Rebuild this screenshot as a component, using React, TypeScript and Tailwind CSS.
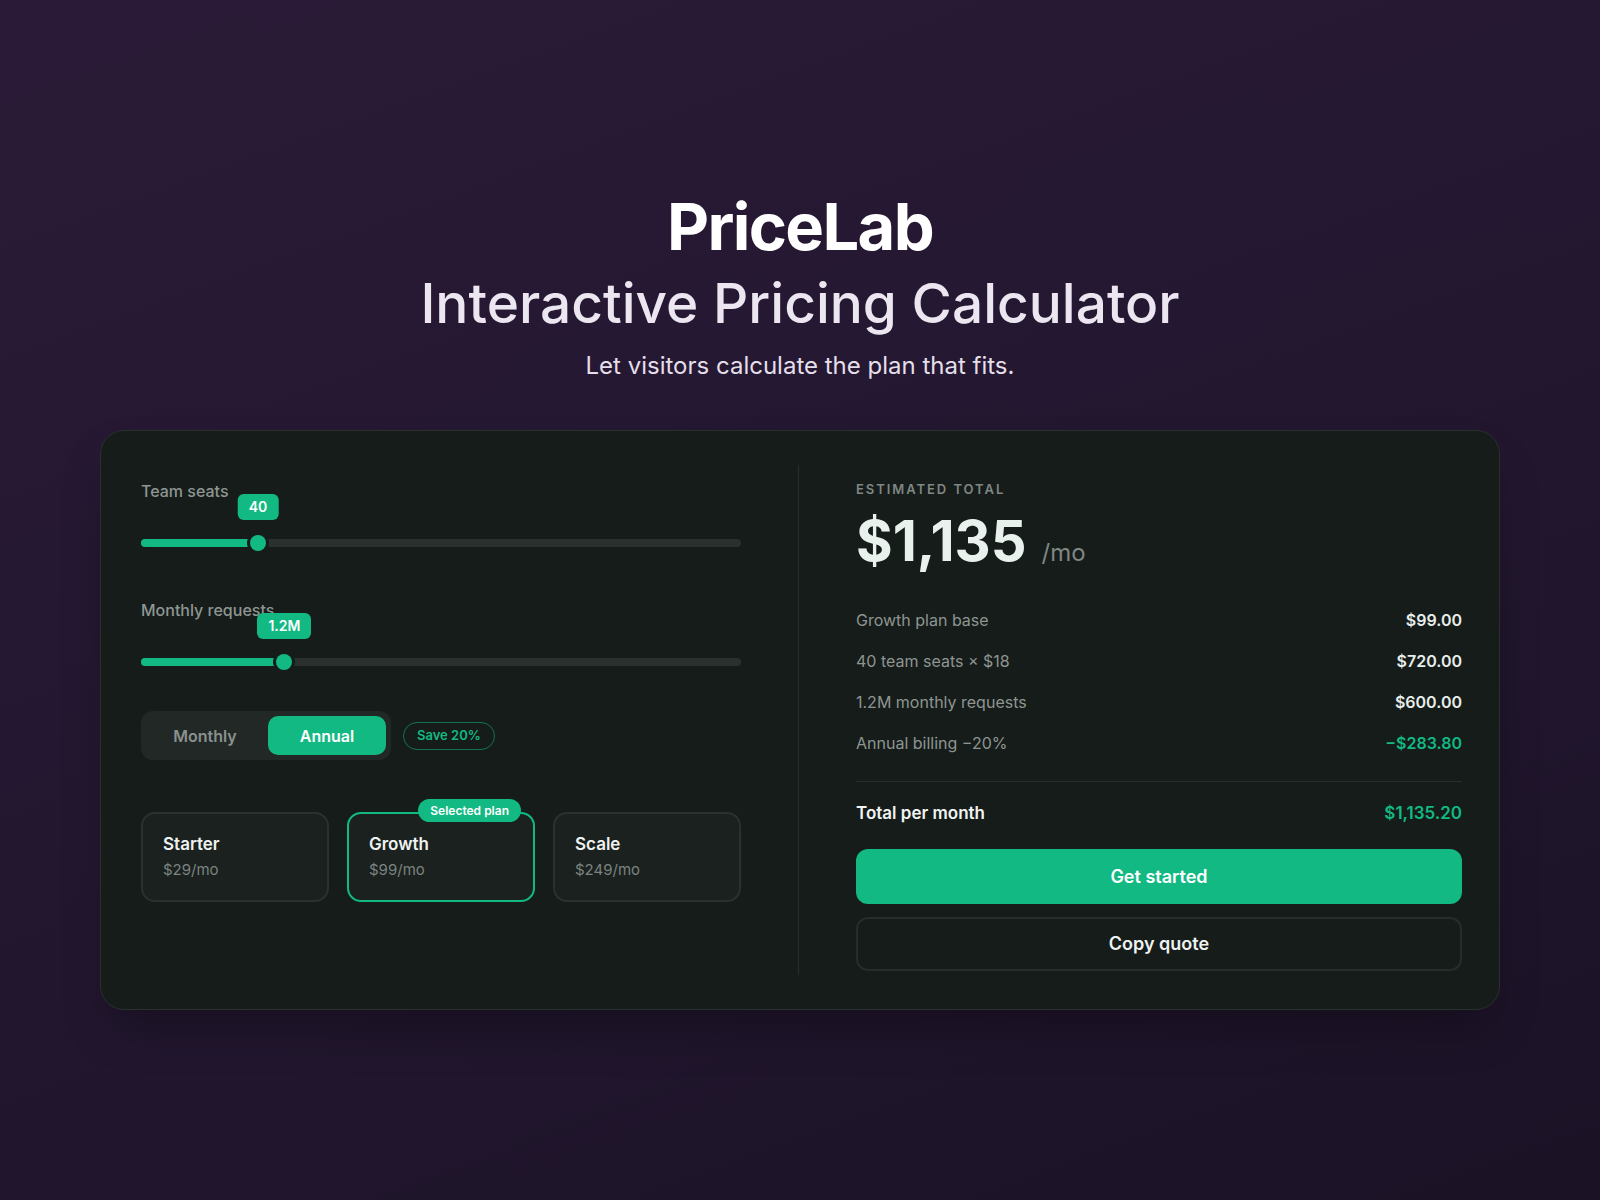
import React from 'react';

const GREEN = 'bg-[#12b983]';

type SliderProps = { label: string; value: string; pct: number; className?: string };

const Slider: React.FC<SliderProps> = ({ label, value, pct, className }) => {
    return (
        <div className={className}>
            <div className="text-base font-medium leading-6 text-[#8f9692]">{label}</div>
            <div className="relative mt-9 h-2 rounded-full bg-[#29302d]">
                <div className={`absolute inset-y-0 left-0 rounded-full ${GREEN}`} style={{ width: `${pct}%` }} />
                <div
                    className={`absolute top-1/2 size-4 -translate-x-1/2 -translate-y-1/2 rounded-full ${GREEN} ring-[3px] ring-[#151c1a]`}
                    style={{ left: `${pct}%` }}
                />
                <div
                    className={`absolute bottom-[27px] -translate-x-1/2 rounded-md ${GREEN} px-[11px] py-[3px] text-sm font-semibold leading-5 text-white`}
                    style={{ left: `${pct}%` }}
                >
                    {value}
                </div>
            </div>
        </div>
    );
};

const plans = [
    { name: 'Starter', price: '$29/mo' },
    { name: 'Growth', price: '$99/mo', selected: true },
    { name: 'Scale', price: '$249/mo' },
];

const lines = [
    { label: 'Growth plan base', value: '$99.00' },
    { label: '40 team seats × $18', value: '$720.00' },
    { label: '1.2M monthly requests', value: '$600.00' },
    { label: 'Annual billing −20%', value: '−$283.80', discount: true },
];

const App: React.FC = () => {
    return (
        <div className="min-h-screen bg-[linear-gradient(160deg,#2a1a37_0%,#231730_50%,#1b1226_100%)] pt-[194px] font-['Inter',sans-serif]">
            <header className="text-center">
                <h1 className="text-[65px] font-bold leading-none tracking-tight text-white">PriceLab</h1>
                <h2 className="mt-[17px] text-[55px] font-medium leading-none text-[#ebe6f0]">
                    Interactive Pricing Calculator
                </h2>
                <p className="mt-[19px] text-2xl leading-8 text-[#e4dfe9]">Let visitors calculate the plan that fits.</p>
            </header>

            <div className="mx-auto mt-12 grid w-[1400px] grid-cols-[600px_1px_1fr] gap-x-[57px] rounded-3xl border border-[#2a302e] bg-[#151c1a] py-[34px] pl-10 pr-[37px] shadow-2xl shadow-black/30">
                {/* left: inputs */}
                <div className="pt-[14px]">
                    <Slider label="Team seats" value="40" pct={19.5} />
                    <Slider label="Monthly requests" value="1.2M" pct={23.9} className="mt-[51px]" />

                    <div className="mt-[45px] flex items-center">
                        <div className="flex gap-1 rounded-xl bg-[#212826] p-[5px]">
                            <button className="h-[39px] w-[118px] rounded-[10px] text-base font-semibold text-[#8a918e]">Monthly</button>
                            <button className={`h-[39px] w-[118px] rounded-[10px] ${GREEN} text-base font-semibold text-white`}>Annual</button>
                        </div>
                        <span className="ml-3 flex h-7 items-center rounded-full border border-[#12b983]/55 px-[13px] text-[13px] font-semibold text-[#12b983]">
                            Save 20%
                        </span>
                    </div>

                    <div className="mt-[52px] grid grid-cols-3 gap-[18px]">
                        {plans.map(plan => (
                            <div
                                key={plan.name}
                                className={`relative rounded-[14px] border-2 bg-[#1a211f] px-5 pb-5 pt-[18px] ${plan.selected ? 'border-[#12b983]' : 'border-[#2a312e]'}`}
                            >
                                {plan.selected && (
                                    <span className={`absolute -top-[15px] right-3 h-[23px] rounded-full ${GREEN} px-3 text-xs font-semibold leading-[23px] text-white`}>
                                        Selected plan
                                    </span>
                                )}
                                <p className="text-[17px] font-semibold leading-6 text-[#eef2f0]">{plan.name}</p>
                                <p className="mt-1 text-[15px] leading-5 text-[#7c8380]">{plan.price}</p>
                            </div>
                        ))}
                    </div>
                </div>

                <div className="self-stretch bg-[#262d2a]" />

                {/* right: summary */}
                <div className="pb-1 pt-[14px]">
                    <p className="text-[13px] font-semibold uppercase leading-5 tracking-[0.15em] text-[#7f8783]">Estimated total</p>
                    <div className="mt-[14px] flex items-baseline">
                        <span className="text-[56px] font-bold leading-none text-[#e9f1ed]">$1,135</span>
                        <span className="ml-[15px] text-2xl text-[#7f8783]">/mo</span>
                    </div>

                    <div className="mt-[39px] flex flex-col gap-[17px]">
                        {lines.map(line => (
                            <div key={line.label} className="flex justify-between text-base leading-6">
                                <span className="text-[#8e9591]">{line.label}</span>
                                <span className={`font-semibold ${line.discount ? 'text-[#12b983]' : 'text-[#e8eeeb]'}`}>{line.value}</span>
                            </div>
                        ))}
                    </div>

                    <div className="mt-[26px] h-px bg-[#262d2a]" />

                    <div className="mt-[19px] flex justify-between text-[17px] font-semibold leading-6">
                        <span className="text-[#f0f4f2]">Total per month</span>
                        <span className="text-[#12b983]">$1,135.20</span>
                    </div>

                    <button className={`mt-6 h-[55px] w-full rounded-xl ${GREEN} text-lg font-semibold text-white`}>Get started</button>
                    <button className="mt-[13px] h-[54px] w-full rounded-xl border-2 border-[#262d2a] text-lg font-semibold text-[#eef2f0]">
                        Copy quote
                    </button>
                </div>
            </div>
        </div>
    );
};

export default App;
